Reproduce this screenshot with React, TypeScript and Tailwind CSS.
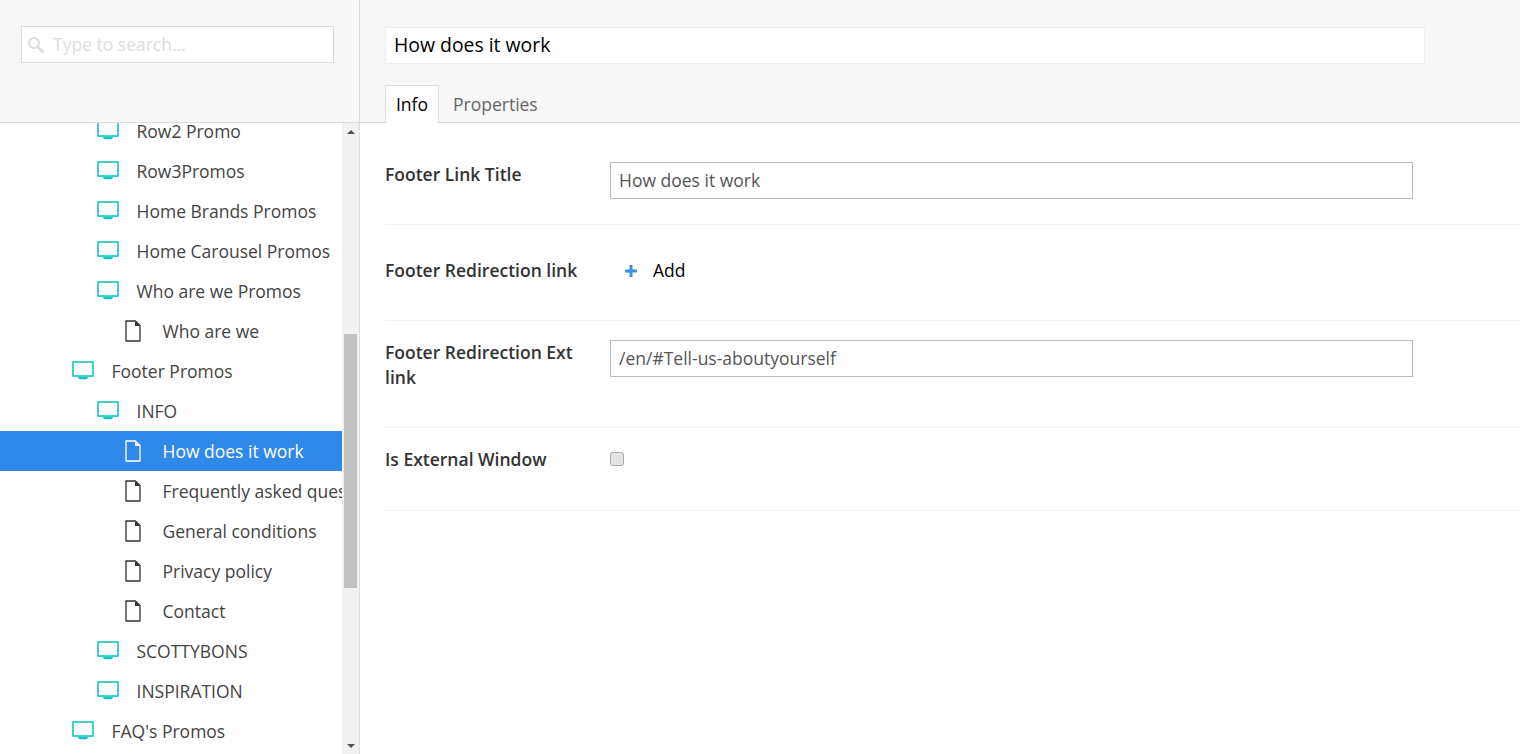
type TreeItem = {
  label: string;
  level: 1 | 2 | 3;
  selected?: boolean;
};

const items: TreeItem[] = [
  { label: 'Row2 Promo', level: 2 },
  { label: 'Row3Promos', level: 2 },
  { label: 'Home Brands Promos', level: 2 },
  { label: 'Home Carousel Promos', level: 2 },
  { label: 'Who are we Promos', level: 2 },
  { label: 'Who are we', level: 3 },
  { label: 'Footer Promos', level: 1 },
  { label: 'INFO', level: 2 },
  { label: 'How does it work', level: 3, selected: true },
  { label: 'Frequently asked questions', level: 3 },
  { label: 'General conditions', level: 3 },
  { label: 'Privacy policy', level: 3 },
  { label: 'Contact', level: 3 },
  { label: 'SCOTTYBONS', level: 2 },
  { label: 'INSPIRATION', level: 2 },
  { label: "FAQ's Promos", level: 1 },
];

function SearchIcon() {
  return (
    <svg width="17" height="17" viewBox="0 0 17 17" className="shrink-0 text-[#ddd]">
      <circle cx="7" cy="7" r="5" fill="none" stroke="currentColor" strokeWidth="2" />
      <path d="M10.500 10.500L15.500 15.500" stroke="currentColor" strokeWidth="3" strokeLinecap="round" />
    </svg>
  );
}

function MonitorIcon() {
  return (
    <svg width="22" height="20" viewBox="0 0 22 20" className="shrink-0 text-[#14c4bd]">
      <rect x="1" y="1" width="20" height="14" fill="none" stroke="currentColor" strokeWidth="1.6" />
      <path d="M6 16h10v.8c-.8 1-1.500 1.500-2.500 1.500h-5c-1 0-1.700-.5-2.500-1.500z" fill="currentColor" />
    </svg>
  );
}

function FileIcon({ selected }: { selected?: boolean }) {
  return (
    <svg
      width="16"
      height="22"
      viewBox="0 0 16 22"
      className={selected ? 'shrink-0 text-white' : 'shrink-0 text-[#333]'}
    >
      <path
        d="M1 1h9.500L15 5.500V21H1z"
        fill="none"
        stroke="currentColor"
        strokeWidth="1.300"
        strokeLinejoin="round"
      />
      <path d="M10 1l5 5h-5z" fill="currentColor" />
    </svg>
  );
}

function PlusIcon() {
  return (
    <svg width="12" height="12" viewBox="0 0 12 12" className="shrink-0 text-[#3a8ee6]">
      <path d="M4.500 0h3v4.500H12v3H7.500V12h-3V7.500H0v-3h4.500z" fill="currentColor" />
    </svg>
  );
}

function TreeRow({ item }: { item: TreeItem }) {
  const indent = item.level === 1 ? 'pl-[72px]' : item.level === 2 ? 'pl-[97px]' : 'pl-[125px]';
  const gap = item.level === 3 ? 'gap-[21.5px]' : 'gap-[17.5px]';
  return (
    <div
      className={`flex h-10 items-center whitespace-nowrap ${indent} ${gap} ${
        item.selected ? 'bg-[#2f89ea] text-white' : 'text-[#444]'
      }`}
    >
      {item.level === 3 ? <FileIcon selected={item.selected} /> : <MonitorIcon />}
      <span>{item.label}</span>
    </div>
  );
}

function Scrollbar() {
  return (
    <div className="flex w-[17px] shrink-0 flex-col items-center bg-[#f1f1f1]">
      <div className="flex h-[17px] w-full items-center justify-center">
        <div className="h-0 w-0 border-x-[4px] border-b-[4px] border-x-transparent border-b-[#505050]" />
      </div>
      <div className="mt-[194px] h-[254px] w-[13px] bg-[#c1c1c1]" />
      <div className="flex-1" />
      <div className="flex h-[17px] w-full items-center justify-center">
        <div className="h-0 w-0 border-x-[4px] border-t-[4px] border-x-transparent border-t-[#505050]" />
      </div>
    </div>
  );
}

export default function App() {
  return (
    <div className="flex h-screen overflow-hidden bg-white font-['Open_Sans',sans-serif] text-[17.5px]">
      <aside className="flex w-[360px] shrink-0 flex-col border-r border-[#ddd]">
        <div className="h-[123px] shrink-0 border-b border-[#ddd] bg-[#f7f7f7] pl-[21px] pt-[26px]">
          <div className="flex h-[37px] w-[313px] items-center border border-[#ddd] bg-white pl-[5px]">
            <SearchIcon />
            <span className="ml-[9px] text-[#ddd]">Type to search...</span>
          </div>
        </div>
        <div className="flex min-h-0 flex-1">
          <div className="min-w-0 flex-1 overflow-hidden">
            <div className="-mt-3">
              {items.map((item) => (
                <TreeRow key={item.label} item={item} />
              ))}
            </div>
          </div>
          <Scrollbar />
        </div>
      </aside>

      <main className="flex min-w-0 flex-1 flex-col">
        <div className="h-[123px] shrink-0 border-b border-[#ddd] bg-[#f7f7f7] pl-[25px] pt-[27px]">
          <div className="flex h-[37px] w-[1040px] items-center border border-[#eee] bg-white pb-[2px] pl-2 text-[19.4px] font-medium leading-[33px] text-black">
            How does it work
          </div>
          <div className="mt-[21px] flex">
            <div className="flex h-[38px] w-[54px] items-center justify-center border border-b-0 border-[#ddd] bg-white text-black">
              Info
            </div>
            <div className="flex h-[38px] items-center pl-[14px] text-[#666]">Properties</div>
          </div>
        </div>

        <div className="pl-[25px] text-[#333]">
          <div className="flex h-[102px] border-b border-[#f2f2f2] pt-[39px]">
            <label className="w-[225px] shrink-0 font-semibold leading-[25px]">Footer Link Title</label>
            <div className="flex h-[37px] w-[803px] items-center border border-[#bbb] pl-2 text-[#555]">
              How does it work
            </div>
          </div>
          <div className="flex h-[96px] items-center border-b border-[#f2f2f2] pb-1">
            <label className="w-[225px] shrink-0 font-semibold leading-[25px]">Footer Redirection link</label>
            <div className="flex items-center pl-[15px] text-black">
              <PlusIcon />
              <span className="ml-[16px]">Add</span>
            </div>
          </div>
          <div className="flex h-[107px] border-b border-[#f2f2f2] pt-[19px]">
            <label className="w-[225px] shrink-0 pr-8 font-semibold leading-[25px]">Footer Redirection Ext link</label>
            <div className="flex h-[37px] w-[803px] items-center border border-[#bbb] pl-2 text-[#555]">
              /en/#Tell-us-aboutyourself
            </div>
          </div>
          <div className="flex h-[83px] border-b border-[#f2f2f2] pt-[19px]">
            <label className="w-[225px] shrink-0 font-semibold leading-[25px]">Is External Window</label>
            <div className="mt-[5px] h-[14px] w-[14px] rounded-[3px] border border-[#aaa] bg-[#e4e4e4]" />
          </div>
        </div>
      </main>
    </div>
  );
}
